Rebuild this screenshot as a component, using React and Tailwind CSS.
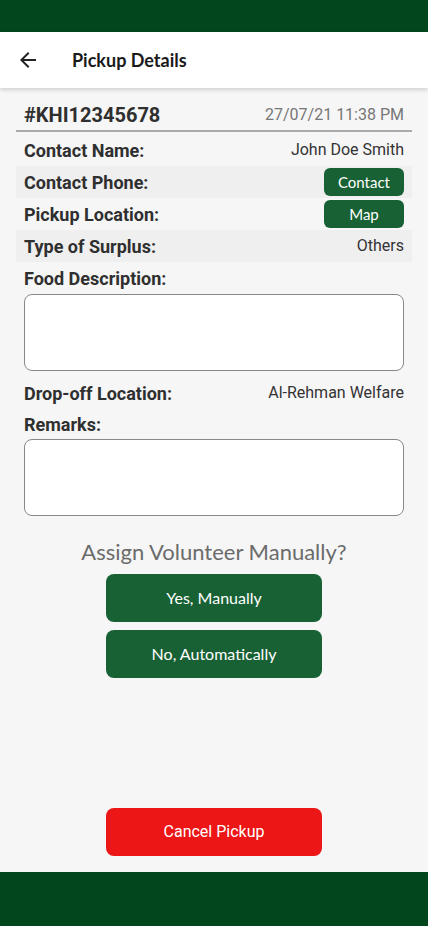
import React from 'react';

const roboto = { fontFamily: 'Roboto, "Liberation Sans", sans-serif' };

const Row = ({ label, shaded, children }) => (
  <div className={`flex h-8 items-center justify-between px-2 ${shaded ? 'bg-[#efefef]' : ''}`}>
    <span className="text-[18px] font-bold text-[#2f2f2f]">{label}</span>
    {children}
  </div>
);

const SmallButton = ({ children }) => (
  <button className="flex h-7 w-20 items-center justify-center rounded-md bg-[#186134] font-['Lato',sans-serif] text-[15px] text-white">
    {children}
  </button>
);

const BigButton = ({ children, red }) => (
  <button
    className={`flex h-12 w-[216px] items-center justify-center rounded-lg text-[16px] text-white ${
      red ? 'bg-[#ec1616] font-[Roboto,sans-serif]' : 'bg-[#186134] font-[Lato,sans-serif]'
    }`}
  >
    {children}
  </button>
);

export default function App() {
  return (
    <div className="flex h-[926px] w-[428px] flex-col bg-[#f6f6f6]" style={roboto}>
      {/* status bar */}
      <div className="h-8 bg-[#01461c]" />

      {/* header */}
      <div className="relative z-10 flex h-14 items-center bg-white px-4 shadow-[0_2px_4px_rgba(0,0,0,0.15)]">
        <svg width="24" height="24" viewBox="0 0 24 24" fill="#222">
          <path d="M20 11H7.83l5.59-5.59L12 4l-8 8 8 8 1.41-1.41L7.83 13H20v-2z" />
        </svg>
        <span className="ml-8 font-['Lato',sans-serif] text-[18px] font-bold text-[#1a1a1a]">Pickup Details</span>
      </div>

      {/* content */}
      <div className="flex flex-1 flex-col px-4">
        <div className="mt-3 flex h-8 items-center justify-between border-b-2 border-[#aaaaaa] px-2">
          <span className="text-[20px] font-bold text-[#2f2f2f]">#KHI12345678</span>
          <span className="text-[16px] text-[#777]">27/07/21 11:38 PM</span>
        </div>

        <div className="mt-0.5">
          <Row label="Contact Name:">
            <span className="text-[16px] text-[#333]">John Doe Smith</span>
          </Row>
          <Row label="Contact Phone:" shaded>
            <SmallButton>Contact</SmallButton>
          </Row>
          <Row label="Pickup Location:">
            <SmallButton>Map</SmallButton>
          </Row>
          <Row label="Type of Surplus:" shaded>
            <span className="text-[16px] text-[#333]">Others</span>
          </Row>
        </div>

        <div className="flex h-8 items-center px-2">
          <span className="text-[18px] font-bold text-[#2f2f2f]">Food Description:</span>
        </div>
        <div className="mx-2 h-[77px] rounded-lg border border-[#888] bg-white" />

        <div className="mt-1.5">
          <Row label="Drop-off Location:">
            <span className="text-[16px] text-[#333]">Al-Rehman Welfare</span>
          </Row>
        </div>

        <div className="flex h-[30px] items-center px-2">
          <span className="text-[18px] font-bold text-[#2f2f2f]">Remarks:</span>
        </div>
        <div className="mx-2 h-[77px] rounded-lg border border-[#888] bg-white" />

        <div className="mt-[21px] text-center font-['Lato',sans-serif] text-[22px] leading-[30px] text-[#6b6b6b]">
          Assign Volunteer Manually?
        </div>
        <div className="mt-[7px] flex flex-col items-center gap-2">
          <BigButton>Yes, Manually</BigButton>
          <BigButton>No, Automatically</BigButton>
        </div>

        <div className="mt-auto mb-4 flex justify-center">
          <BigButton red>Cancel Pickup</BigButton>
        </div>
      </div>

      {/* bottom bar */}
      <div className="h-[54px] bg-[#01461c]" />
    </div>
  );
}
